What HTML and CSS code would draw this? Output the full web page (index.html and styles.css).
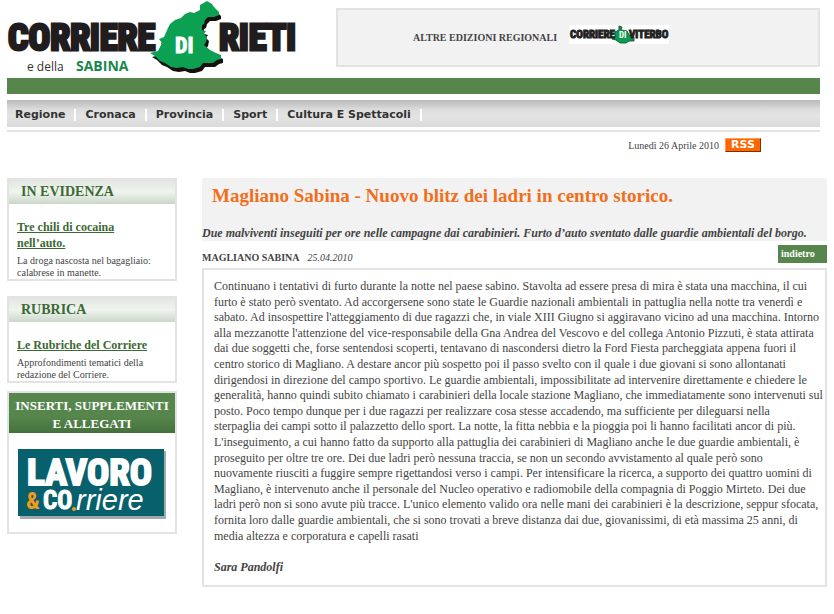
FILE: index.html
```html
<!DOCTYPE html>
<html lang="it">
<head>
<meta charset="utf-8">
<title>Corriere di Rieti</title>
<link rel="stylesheet" href="styles.css">
</head>
<body>
<header class="masthead">
  <a class="logo" href="#" aria-label="Corriere di Rieti e della Sabina">
    <svg width="293" height="78" viewBox="0 0 293 78">
      <g class="logo-word">
        <text x="1" y="50">CORRIERE</text>
        <text x="212" y="50">RIETI</text>
      </g>
      <g>
        <path fill="#15110f" transform="translate(2 4)" d="M200 1L205 4L207 7L212 12L212 15L207 17L201 17L198 20L197 24L195 25L195 30L199 31L197 34L200 37L199 42L197 45L203 50L209 53L214 55L214 59L210 60L206 63L196 63L193 67L186 69L181 69L176 67L170 68L164 67L158 63L153 61L148 56L143 53L151 51L155 43L152 39L157 37L161 28L163 24L168 20L174 18L178 14L183 12L187 13L193 10L193 5Z"/>
        <path fill="#0ca152" d="M200 1L205 4L207 7L212 12L212 15L207 17L201 17L198 20L197 24L195 25L195 30L199 31L197 34L200 37L199 42L197 45L203 50L209 53L214 55L214 59L210 60L206 63L196 63L193 67L186 69L181 69L176 67L170 68L164 67L158 63L153 61L148 56L143 53L151 51L155 43L152 39L157 37L161 28L163 24L168 20L174 18L178 14L183 12L187 13L193 10L193 5Z"/>
      </g>
      <text class="logo-di" x="168" y="53">DI</text>
      <text class="logo-small" x="20" y="71">e della</text>
      <text class="logo-sabina" x="69" y="71">SABINA</text>
    </svg>
  </a>
  <div class="editions">
    <span>ALTRE EDIZIONI REGIONALI</span>
    <a href="#" aria-label="Corriere di Viterbo">
      <svg width="100" height="19" viewBox="0 0 100 19">
        <path fill="#fff" d="M0 0H100V19H0Z"/>
        <path fill="#0b9a50" stroke="#17633b" d="M50 1L53 2L52 5L58 6L60 10L65 12L65 16L60 16L57 18L51 18L47 15L43 14L46 12L46 7L50 5Z"/>
        <text class="mini-word" x="1" y="13">CORRIERE</text>
        <text class="mini-word" x="60" y="13">VITERBO</text>
        <text class="mini-di" x="50" y="13">DI</text>
      </svg>
    </a>
  </div>
</header>
<div class="green-bar"></div>
<nav class="menu">
  <ul>
    <li><a href="#">Regione</a></li>
    <li><a href="#">Cronaca</a></li>
    <li><a href="#">Provincia</a></li>
    <li><a href="#">Sport</a></li>
    <li><a href="#">Cultura E Spettacoli</a></li>
  </ul>
</nav>
<div class="dateline"><span>Lunedì 26 Aprile 2010</span><a class="rss" href="#">RSS</a></div>
<div class="columns">
  <aside class="side">
    <section class="panel">
      <h2>IN EVIDENZA</h2>
      <div class="teaser">
        <h3><a href="#">Tre chili di cocaina nell’auto.</a></h3>
        <p>La droga nascosta nel bagagliaio: calabrese in manette.</p>
      </div>
    </section>
    <section class="panel">
      <h2>RUBRICA</h2>
      <div class="teaser">
        <h3><a href="#">Le Rubriche del Corriere</a></h3>
        <p>Approfondimenti tematici della redazione del Corriere.</p>
      </div>
    </section>
    <section class="panel inserts">
      <h2>INSERTI, SUPPLEMENTI E ALLEGATI</h2>
      <a class="banner" href="#" aria-label="Lavoro &amp; Corriere">
        <svg width="148" height="70" viewBox="0 0 148 70">
          <path fill="#a3aaab" d="M2 2H148V70H2Z"/>
          <path fill="#07606c" d="M0 0H146V67H0Z"/>
          <text class="lavoro" x="9" y="36">LAVORO</text>
          <text class="amp" x="8" y="60">&amp;</text>
          <text class="co" x="25" y="60">CO</text>
          <circle cx="56" cy="60" r="2" fill="#f39a1a"/>
          <text class="rriere" x="58" y="61">rriere</text>
        </svg>
      </a>
    </section>
  </aside>
  <main class="story">
    <div class="headline">
      <h1>Magliano Sabina - Nuovo blitz dei ladri in centro storico.</h1>
      <p>Due malviventi inseguiti per ore nelle campagne dai carabinieri. Furto d’auto sventato dalle guardie ambientali del borgo.</p>
    </div>
    <div class="byline">
      <p><b>MAGLIANO SABINA</b><i>25.04.2010</i></p>
      <a class="back" href="#">indietro</a>
    </div>
    <article class="body-text">
      <p>Continuano i tentativi di furto durante la notte nel paese sabino. Stavolta ad essere presa di mira è stata una macchina, il cui<br>
      furto è stato però sventato. Ad accorgersene sono state le Guardie nazionali ambientali in pattuglia nella notte tra venerdì e<br>
      sabato. Ad insospettire l'atteggiamento di due ragazzi che, in viale XIII Giugno si aggiravano vicino ad una macchina. Intorno<br>
      alla mezzanotte l'attenzione del vice-responsabile della Gna Andrea del Vescovo e del collega Antonio Pizzuti, è stata attirata<br>
      dai due soggetti che, forse sentendosi scoperti, tentavano di nascondersi dietro la Ford Fiesta parcheggiata appena fuori il<br>
      centro storico di Magliano. A destare ancor più sospetto poi il passo svelto con il quale i due giovani si sono allontanati<br>
      dirigendosi in direzione del campo sportivo. Le guardie ambientali, impossibilitate ad intervenire direttamente e chiedere le<br>
      generalità, hanno quindi subito chiamato i carabinieri della locale stazione Magliano, che immediatamente sono intervenuti sul<br>
      posto. Poco tempo dunque per i due ragazzi per realizzare cosa stesse accadendo, ma sufficiente per dileguarsi nella<br>
      sterpaglia dei campi sotto il palazzetto dello sport. La notte, la fitta nebbia e la pioggia poi li hanno facilitati ancor di più.<br>
      L'inseguimento, a cui hanno fatto da supporto alla pattuglia dei carabinieri di Magliano anche le due guardie ambientali, è<br>
      proseguito per oltre tre ore. Dei due ladri però nessuna traccia, se non un secondo avvistamento al quale però sono<br>
      nuovamente riusciti a fuggire sempre rigettandosi verso i campi. Per intensificare la ricerca, a supporto dei quattro uomini di<br>
      Magliano, è intervenuto anche il personale del Nucleo operativo e radiomobile della compagnia di Poggio Mirteto. Dei due<br>
      ladri però non si sono avute più tracce. L'unico elemento valido ora nelle mani dei carabinieri è la descrizione, seppur sfocata,<br>
      fornita loro dalle guardie ambientali, che si sono trovati a breve distanza dai due, giovanissimi, di età massima 25 anni, di<br>
      media altezza e corporatura e capelli rasati</p>
      <p class="author">Sara Pandolfi</p>
    </article>
  </main>
</div>
</body>
</html>
```
FILE: styles.css
```css
* { box-sizing: border-box; }
body { margin: 0; padding: 0 7px 24px; background: #fff; color: #444; font-family: "Liberation Serif", "Times New Roman", serif; font-size: 12px; line-height: 1.3; }
h1, h2, h3, p, ul { margin: 0; padding: 0; }
svg { display: block; }
.masthead, .green-bar, .menu, .dateline { margin-right: 7px; }
.masthead { display: flex; gap: 36px; height: 78px; }
.logo-word, .logo-di, .mini-word, .mini-di, .lavoro, .co, .amp { font-family: "Liberation Sans Narrow", "Roboto Condensed", "Liberation Sans", sans-serif; font-weight: bold; }
.logo-word { font-size: 36px; fill: #211d1e; stroke: #211d1e; stroke-width: 3px; }
.logo-di { font-size: 22px; fill: #fff; stroke: #fff; stroke-width: 1px; }
.logo-small { font: 12px "Open Sans", sans-serif; fill: #333; }
.logo-sabina { font: bold 14px "Open Sans", sans-serif; fill: #18874b; }
.editions { flex: 1; display: flex; align-items: center; gap: 12px; height: 59px; margin-top: 8px; padding-left: 75px; border: 2px solid #e3e3e3; background: #f2f2f2; font-size: 10px; font-weight: bold; }
.editions a { margin-bottom: 6px; }
.mini-word { font-size: 11px; fill: #222; stroke: #222; stroke-width: 1px; }
.mini-di { font-size: 9px; fill: #fff; }
.green-bar { height: 16px; background: #56864c; }
.menu { margin-top: 6px; padding-bottom: 3px; border-bottom: 2px solid #e3e3e3; }
.menu ul { display: flex; align-items: center; height: 27px; padding-top: 2px; background: linear-gradient(#b9b9b9, #dcdcdc 35%, #e4e4e4 60%, #dadada); list-style: none; }
.menu li { padding: 0 9px; border-right: 2px solid #fff; }
.menu li:first-child { padding-left: 8px; }
.menu a { display: block; color: #333; font: bold 11px/12px "DejaVu Sans", Verdana, sans-serif; text-decoration: none; }
.dateline { display: flex; justify-content: flex-end; align-items: center; gap: 6px; height: 26px; padding-right: 59px; font-size: 10px; }
.rss { width: 36px; height: 14px; border: 1px solid; border-color: #ff9b55 #7a2f00 #7a2f00 #ff9b55; background: #ff6600; color: #fff; font: bold 11px/12px "DejaVu Sans", Verdana, sans-serif; text-align: center; text-decoration: none; }
.columns { display: flex; gap: 25px; align-items: flex-start; margin-top: 20px; }
.side { width: 170px; flex: none; }
.panel { border: 2px solid #e3e3e3; margin-bottom: 15px; }
.panel h2 { padding-left: 12px; background: linear-gradient(#e2e6e1, #eff4ee 50%, #cbd7c9); color: #3c6934; font-size: 14px; line-height: 24px; }
.teaser { padding: 15px 14px 0 8px; }
.teaser h3 { font-size: 12px; line-height: 16px; }
.teaser a { color: #3c6934; }
.teaser p { padding-top: 4px; font-size: 10px; line-height: 12px; }
.panel + .inserts { margin-top: -7px; }
.panel.inserts h2 { padding: 4px 4px 0; background: linear-gradient(#56864c 60%, #44703c); color: #fff; font-size: 13px; text-align: center; line-height: 18px; }
.banner { display: block; padding: 16px 9px 13px; }
.lavoro { font-size: 37px; fill: #fff; stroke: #fff; stroke-width: 2px; }
.amp { font-size: 24px; fill: #f39a1a; }
.co { font-size: 25px; fill: #fff; stroke: #fff; stroke-width: 1px; }
.rriere { font: italic 29px "Liberation Sans Narrow", "Liberation Sans", sans-serif; fill: #fff; }
.story { flex: 1; min-width: 0; }
.headline { background: #f2f2f2; }
.headline h1 { padding: 7px 10px 19px; color: #f36e1b; font-size: 19px; line-height: 22px; }
.headline p { font-weight: bold; font-style: italic; line-height: 15px; }
.byline { display: flex; justify-content: space-between; align-items: flex-start; padding: 4px 0; font-size: 10px; }
.byline p { padding-top: 6px; }
.byline i { margin-left: 8px; }
.back { width: 49px; padding-left: 3px; background: #56864c; color: #fff; font-weight: bold; line-height: 18px; text-decoration: none; }
.body-text { padding: 9px 0 9px 10px; border: 2px solid #e3e3e3; }
.author { margin-top: 16px; font-weight: bold; font-style: italic; }
```
